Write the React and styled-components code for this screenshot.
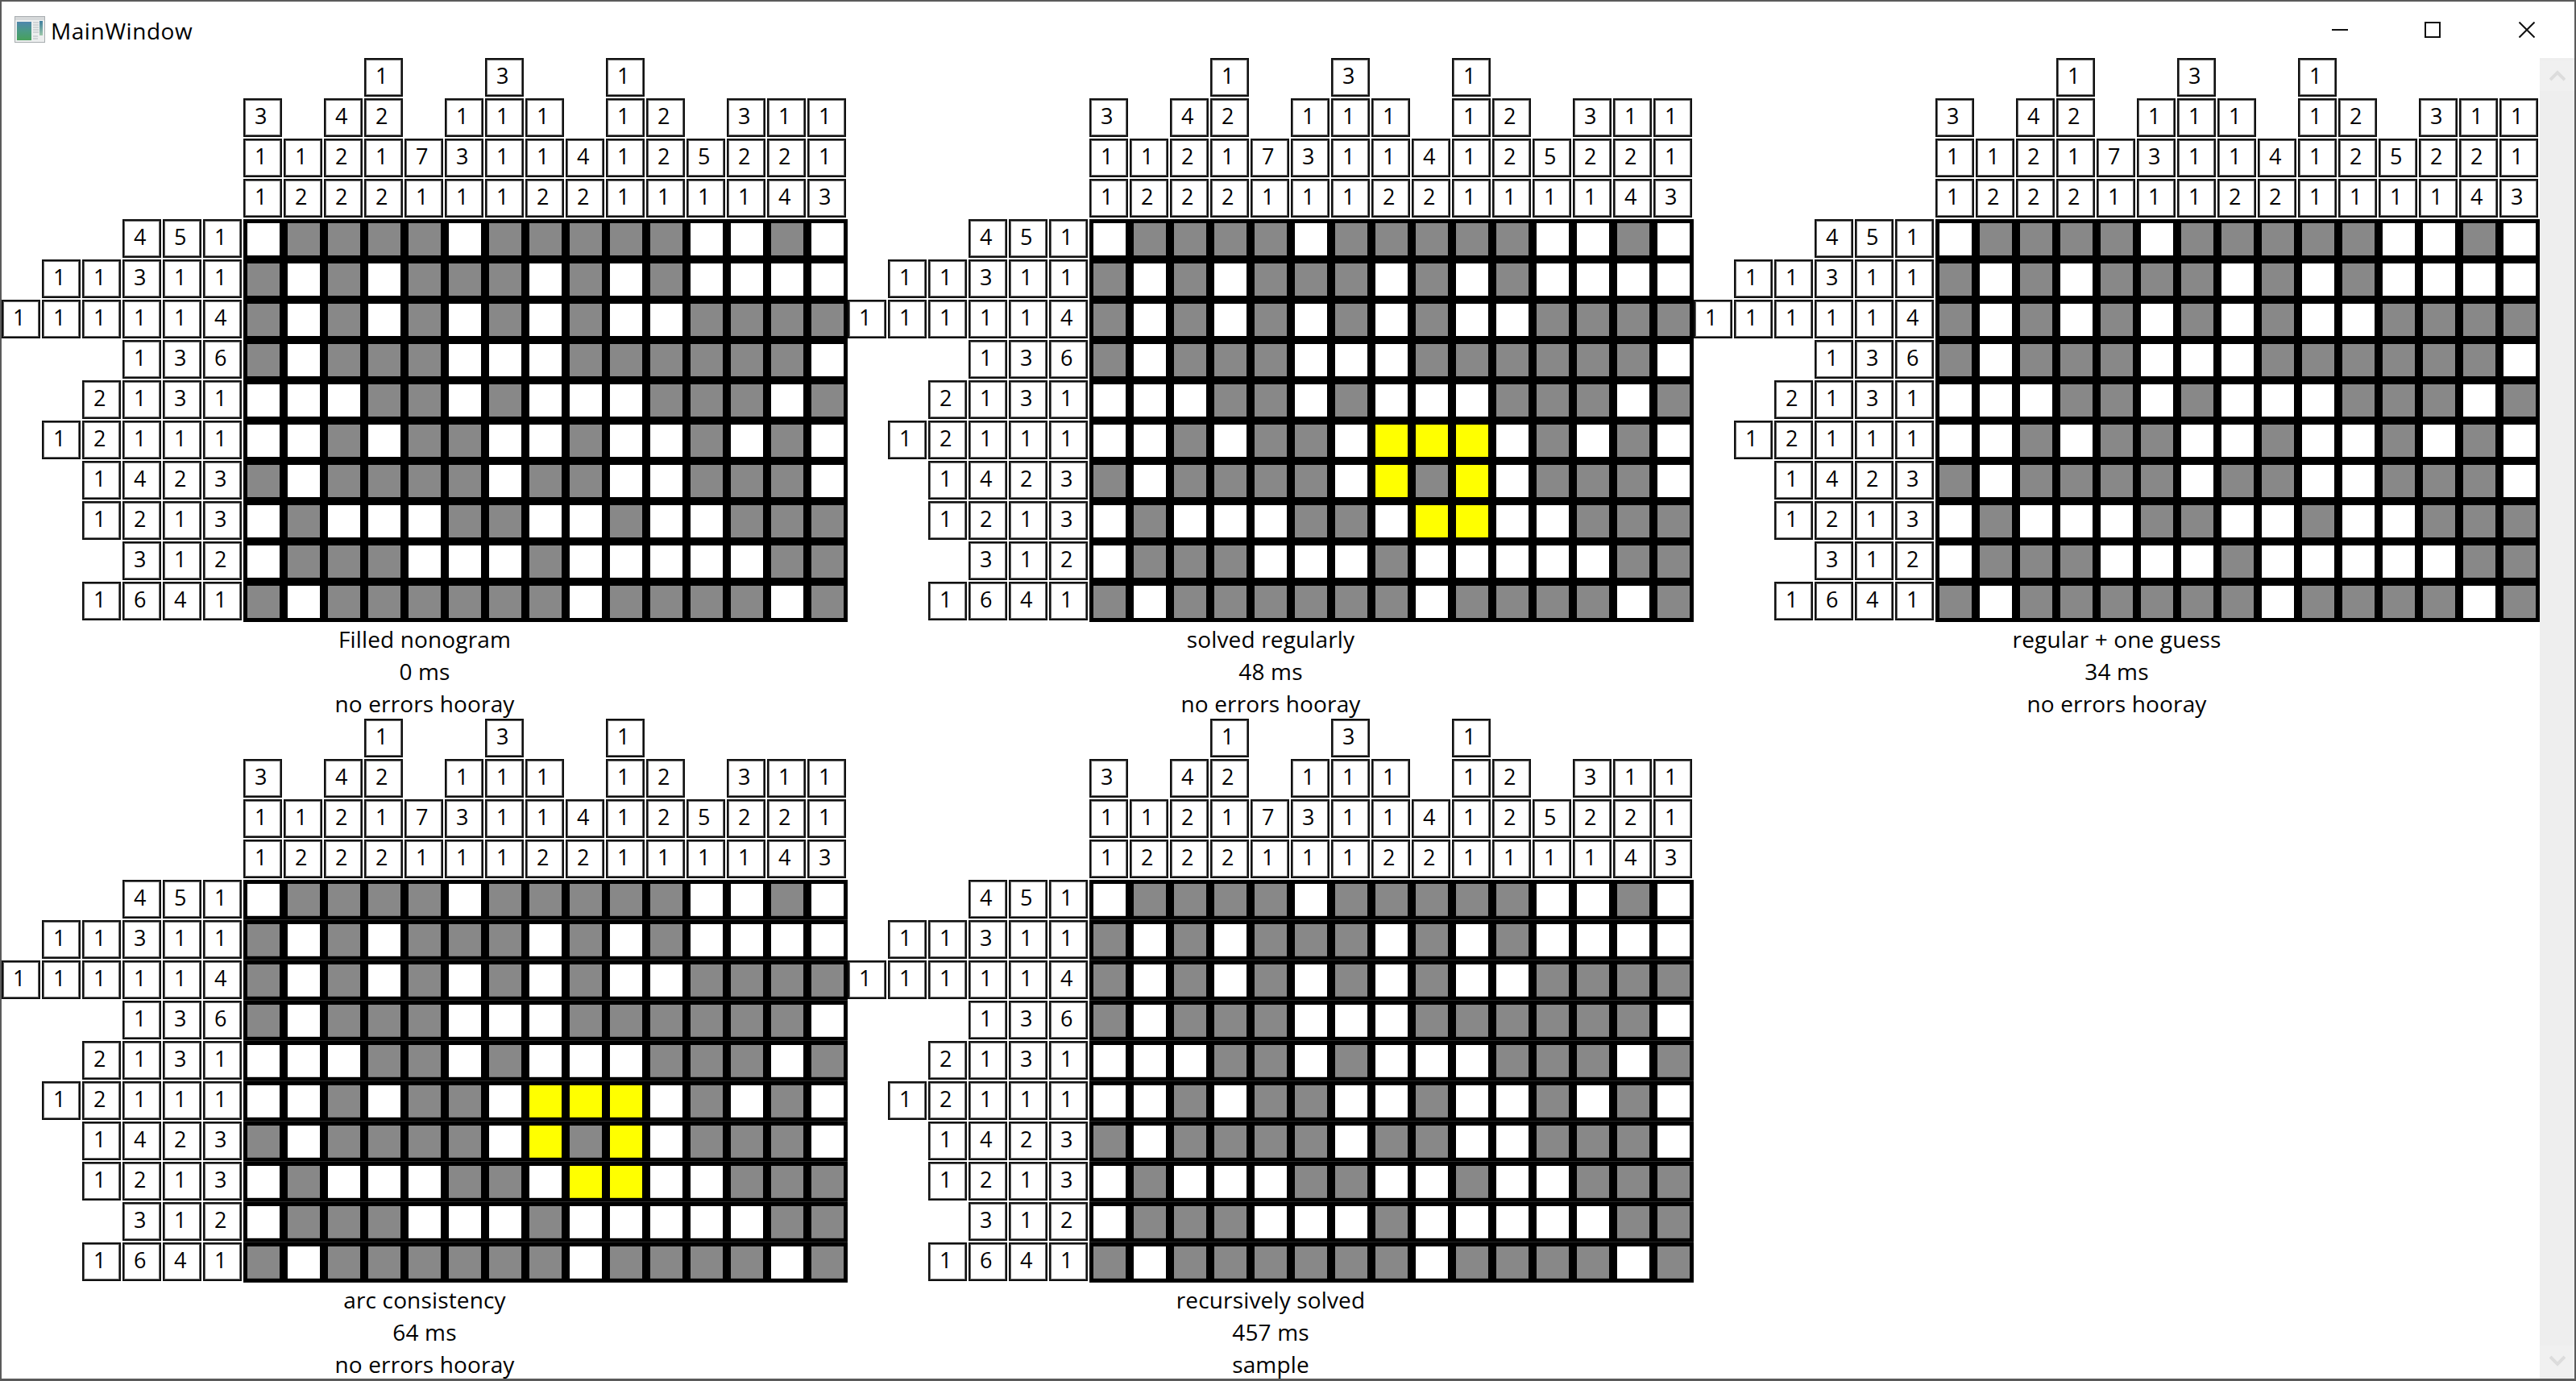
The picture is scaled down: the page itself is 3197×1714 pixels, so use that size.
import React from "react";
import styled, { createGlobalStyle, css } from "styled-components";

const BASE = [
  "WGGGGWGGGGGWWGW",
  "GWGWGGGWGWGWWWW",
  "GWGWGWGWGWWGGGG",
  "GWGGGWWWGGGGGGW",
  "WWWGGWGWWWGGGWG",
  "WWGWGGWWGWWGWGW",
  "GWGGGGWGGWWGGGW",
  "WGWWWGGWWGWWGGG",
  "WGGGWWWGWWWWWGG",
  "GWGGGGGGWGGGGWG",
];

// the three-wide knot the slower solvers leave unsolved
const KNOT = ["5:7", "5:8", "5:9", "6:7", "6:9", "7:8", "7:9"];

const TOP_CLUES = [
  [3, 1, 1],
  [1, 2],
  [4, 2, 2],
  [1, 2, 1, 2],
  [7, 1],
  [1, 3, 1],
  [3, 1, 1, 1],
  [1, 1, 2],
  [4, 2],
  [1, 1, 1, 1],
  [2, 2, 1],
  [5, 1],
  [3, 2, 1],
  [1, 2, 4],
  [1, 1, 3],
];

const LEFT_CLUES = [
  [4, 5, 1],
  [1, 1, 3, 1, 1],
  [1, 1, 1, 1, 1, 4],
  [1, 3, 6],
  [2, 1, 3, 1],
  [1, 2, 1, 1, 1],
  [1, 4, 2, 3],
  [1, 2, 1, 3],
  [3, 1, 2],
  [1, 6, 4, 1],
];

const RESULTS = [
  { title: "Filled nonogram", time: "0 ms", note: "no errors hooray" },
  { title: "solved regularly", time: "48 ms", note: "no errors hooray", knot: true },
  { title: "regular + one guess", time: "34 ms", note: "no errors hooray" },
  { title: "arc consistency", time: "64 ms", note: "no errors hooray", knot: true, soft: true },
  { title: "recursively solved", time: "457 ms", note: "sample", soft: true },
];

const FILLS = { W: "#ffffff", G: "#888888", Y: "#ffff00" };

const GlobalStyle = createGlobalStyle`
  html, body {
    margin: 0;
    padding: 0;
    background: #fff;
    overflow: hidden;
  }
`;

const Frame = styled.div`
  box-sizing: border-box;
  width: 3197px;
  height: 1714px;
  border: solid #5a5a5a;
  border-width: 2px 2px 3px 2px;
  background: #fff;
  display: flex;
  flex-direction: column;
  overflow: hidden;
  font-family: "Open Sans", "Noto Sans", sans-serif;
  color: #000;
`;

const TitleBar = styled.div`
  flex: 0 0 70px;
  display: flex;
  align-items: center;
  padding-left: 16px;
`;

const AppTitle = styled.span`
  margin-left: 7px;
  font-size: 28px;
  letter-spacing: 0.55px;
  margin-top: 1px;
`;

const IconSlot = styled.span`
  display: block;
  margin-top: -2px;
  svg {
    display: block;
  }
`;

const WindowButtons = styled.div`
  margin-left: auto;
  display: flex;
  align-items: center;
  gap: 95px;
  margin-right: 49px;
  margin-top: -1px;
  svg {
    display: block;
  }
  svg:last-child {
    margin-left: 2px;
  }
`;

const Body = styled.div`
  flex: 1;
  min-height: 0;
  display: flex;
`;

const Results = styled.div`
  width: 3150px;
  display: grid;
  grid-template-columns: repeat(3, 1050px);
  grid-auto-rows: 820px;
`;

const Panel = styled.div`
  display: flex;
  flex-direction: column;
`;

const Board = styled.div`
  display: grid;
  grid-template-columns: 300px 750px;
  grid-template-rows: 200px 500px;
`;

const TopClues = styled.div`
  grid-column: 2;
  grid-row: 1;
  display: flex;
`;

const ClueColumn = styled.div`
  width: 50px;
  display: flex;
  flex-direction: column;
  justify-content: flex-end;
`;

const LeftClues = styled.div`
  grid-column: 1;
  grid-row: 2;
  display: flex;
  flex-direction: column;
`;

const ClueRow = styled.div`
  height: 50px;
  display: flex;
  justify-content: flex-end;
`;

const Clue = styled.div`
  box-sizing: border-box;
  flex: 0 0 48px;
  width: 48px;
  height: 48px;
  margin: 0 2px 2px 0;
  padding: 0 0 5px 12px;
  border: 2px solid #111;
  box-shadow: inset 0 0 0 1px #666;
  background: #fff;
  display: flex;
  align-items: center;
  font-size: 27px;
  line-height: 1;
`;

const Field = styled.div`
  grid-column: 2;
  grid-row: 2;
  display: grid;
  grid-template-columns: repeat(15, 50px);
  grid-auto-rows: 50px;
`;

const Cell = styled.div`
  box-sizing: border-box;
  border: 5px solid #000;
  background: ${(p) => FILLS[p.$fill]};
  ${(p) =>
    p.$soft &&
    css`
      position: relative;
      box-shadow: inset 0 -1px 0 rgba(0, 0, 0, 0.2);
      &::after {
        content: "";
        position: absolute;
        left: -5px;
        right: -5px;
        bottom: -5px;
        height: 1px;
        background: #2b2b2b;
      }
    `}
`;

const Caption = styled.div`
  padding-top: 1px;
  text-align: center;
  font-size: 28px;
  letter-spacing: 0.15px;
  line-height: 40px;
`;

const Scrollbar = styled.div`
  width: 43px;
  background: #eeeeee;
  display: flex;
  flex-direction: column;
  justify-content: space-between;
  padding: 3px 0;
  box-sizing: border-box;
`;

const ScrollButton = styled.div`
  height: 38px;
  display: flex;
  align-items: center;
  justify-content: center;
  background: #f0f0f0;
`;

const AppIcon = () => (
  <svg width="38" height="33" viewBox="0 0 38 33">
    <defs>
      <linearGradient id="appPane" x1="0" y1="0" x2="0" y2="1">
        <stop offset="0" stopColor="#4f86ad" />
        <stop offset="0.5" stopColor="#4a9a85" />
        <stop offset="1" stopColor="#47a05a" />
      </linearGradient>
      <linearGradient id="appStrip" x1="0" y1="0" x2="0" y2="1">
        <stop offset="0" stopColor="#3f7f9f" />
        <stop offset="1" stopColor="#9cc8a8" />
      </linearGradient>
    </defs>
    <rect x="0.5" y="0.5" width="37" height="32" fill="#eceeee" stroke="#a8adb0" />
    <rect x="1" y="1" width="36" height="4" fill="#d6d9da" />
    <rect x="3" y="7" width="18" height="23" fill="url(#appPane)" />
    <path d="M23 8h7M23 11h7M23 14h7M23 17h7M23 20h7M23 25h6M23 28h6" stroke="#b4babd" strokeWidth="1.2" />
    <rect x="31" y="6" width="4" height="18" fill="url(#appStrip)" />
  </svg>
);

const MinimizeIcon = () => (
  <svg width="20" height="20" viewBox="0 0 20 20">
    <path d="M0 10h20" stroke="#111" strokeWidth="2" />
  </svg>
);

const MaximizeIcon = () => (
  <svg width="20" height="20" viewBox="0 0 20 20">
    <rect x="1" y="1" width="18" height="18" fill="none" stroke="#111" strokeWidth="2" />
  </svg>
);

const CloseIcon = () => (
  <svg width="20" height="20" viewBox="0 0 20 20">
    <path d="M0.5 0.5l19 19M19.5 0.5l-19 19" stroke="#111" strokeWidth="2" />
  </svg>
);

const Chevron = ({ down }) => (
  <svg width="20" height="14" viewBox="0 0 20 14">
    <path d={down ? "M1 2l9 9 9-9" : "M1 12l9-9 9 9"} fill="none" stroke="#dcdcdc" strokeWidth="4" />
  </svg>
);

function cellFill(row, col, knot) {
  if (knot && KNOT.includes(`${row}:${col}`)) return "Y";
  return BASE[row][col];
}

function Nonogram({ result }) {
  return (
    <Panel>
      <Board>
        <TopClues>
          {TOP_CLUES.map((clues, c) => (
            <ClueColumn key={c}>
              {clues.map((n, i) => (
                <Clue key={i}>{n}</Clue>
              ))}
            </ClueColumn>
          ))}
        </TopClues>
        <LeftClues>
          {LEFT_CLUES.map((clues, r) => (
            <ClueRow key={r}>
              {clues.map((n, i) => (
                <Clue key={i}>{n}</Clue>
              ))}
            </ClueRow>
          ))}
        </LeftClues>
        <Field>
          {BASE.map((line, r) =>
            line
              .split("")
              .map((_, c) => <Cell key={`${r}-${c}`} $fill={cellFill(r, c, result.knot)} $soft={result.soft} />)
          )}
        </Field>
      </Board>
      <Caption>
        <div>{result.title}</div>
        <div>{result.time}</div>
        <div>{result.note}</div>
      </Caption>
    </Panel>
  );
}

export default function App() {
  return (
    <>
      <GlobalStyle />
      <Frame>
        <TitleBar>
          <IconSlot>
            <AppIcon />
          </IconSlot>
          <AppTitle>MainWindow</AppTitle>
          <WindowButtons>
            <MinimizeIcon />
            <MaximizeIcon />
            <CloseIcon />
          </WindowButtons>
        </TitleBar>
        <Body>
          <Results>
            {RESULTS.map((result) => (
              <Nonogram key={result.title} result={result} />
            ))}
          </Results>
          <Scrollbar>
            <ScrollButton>
              <Chevron />
            </ScrollButton>
            <ScrollButton>
              <Chevron down />
            </ScrollButton>
          </Scrollbar>
        </Body>
      </Frame>
    </>
  );
}
